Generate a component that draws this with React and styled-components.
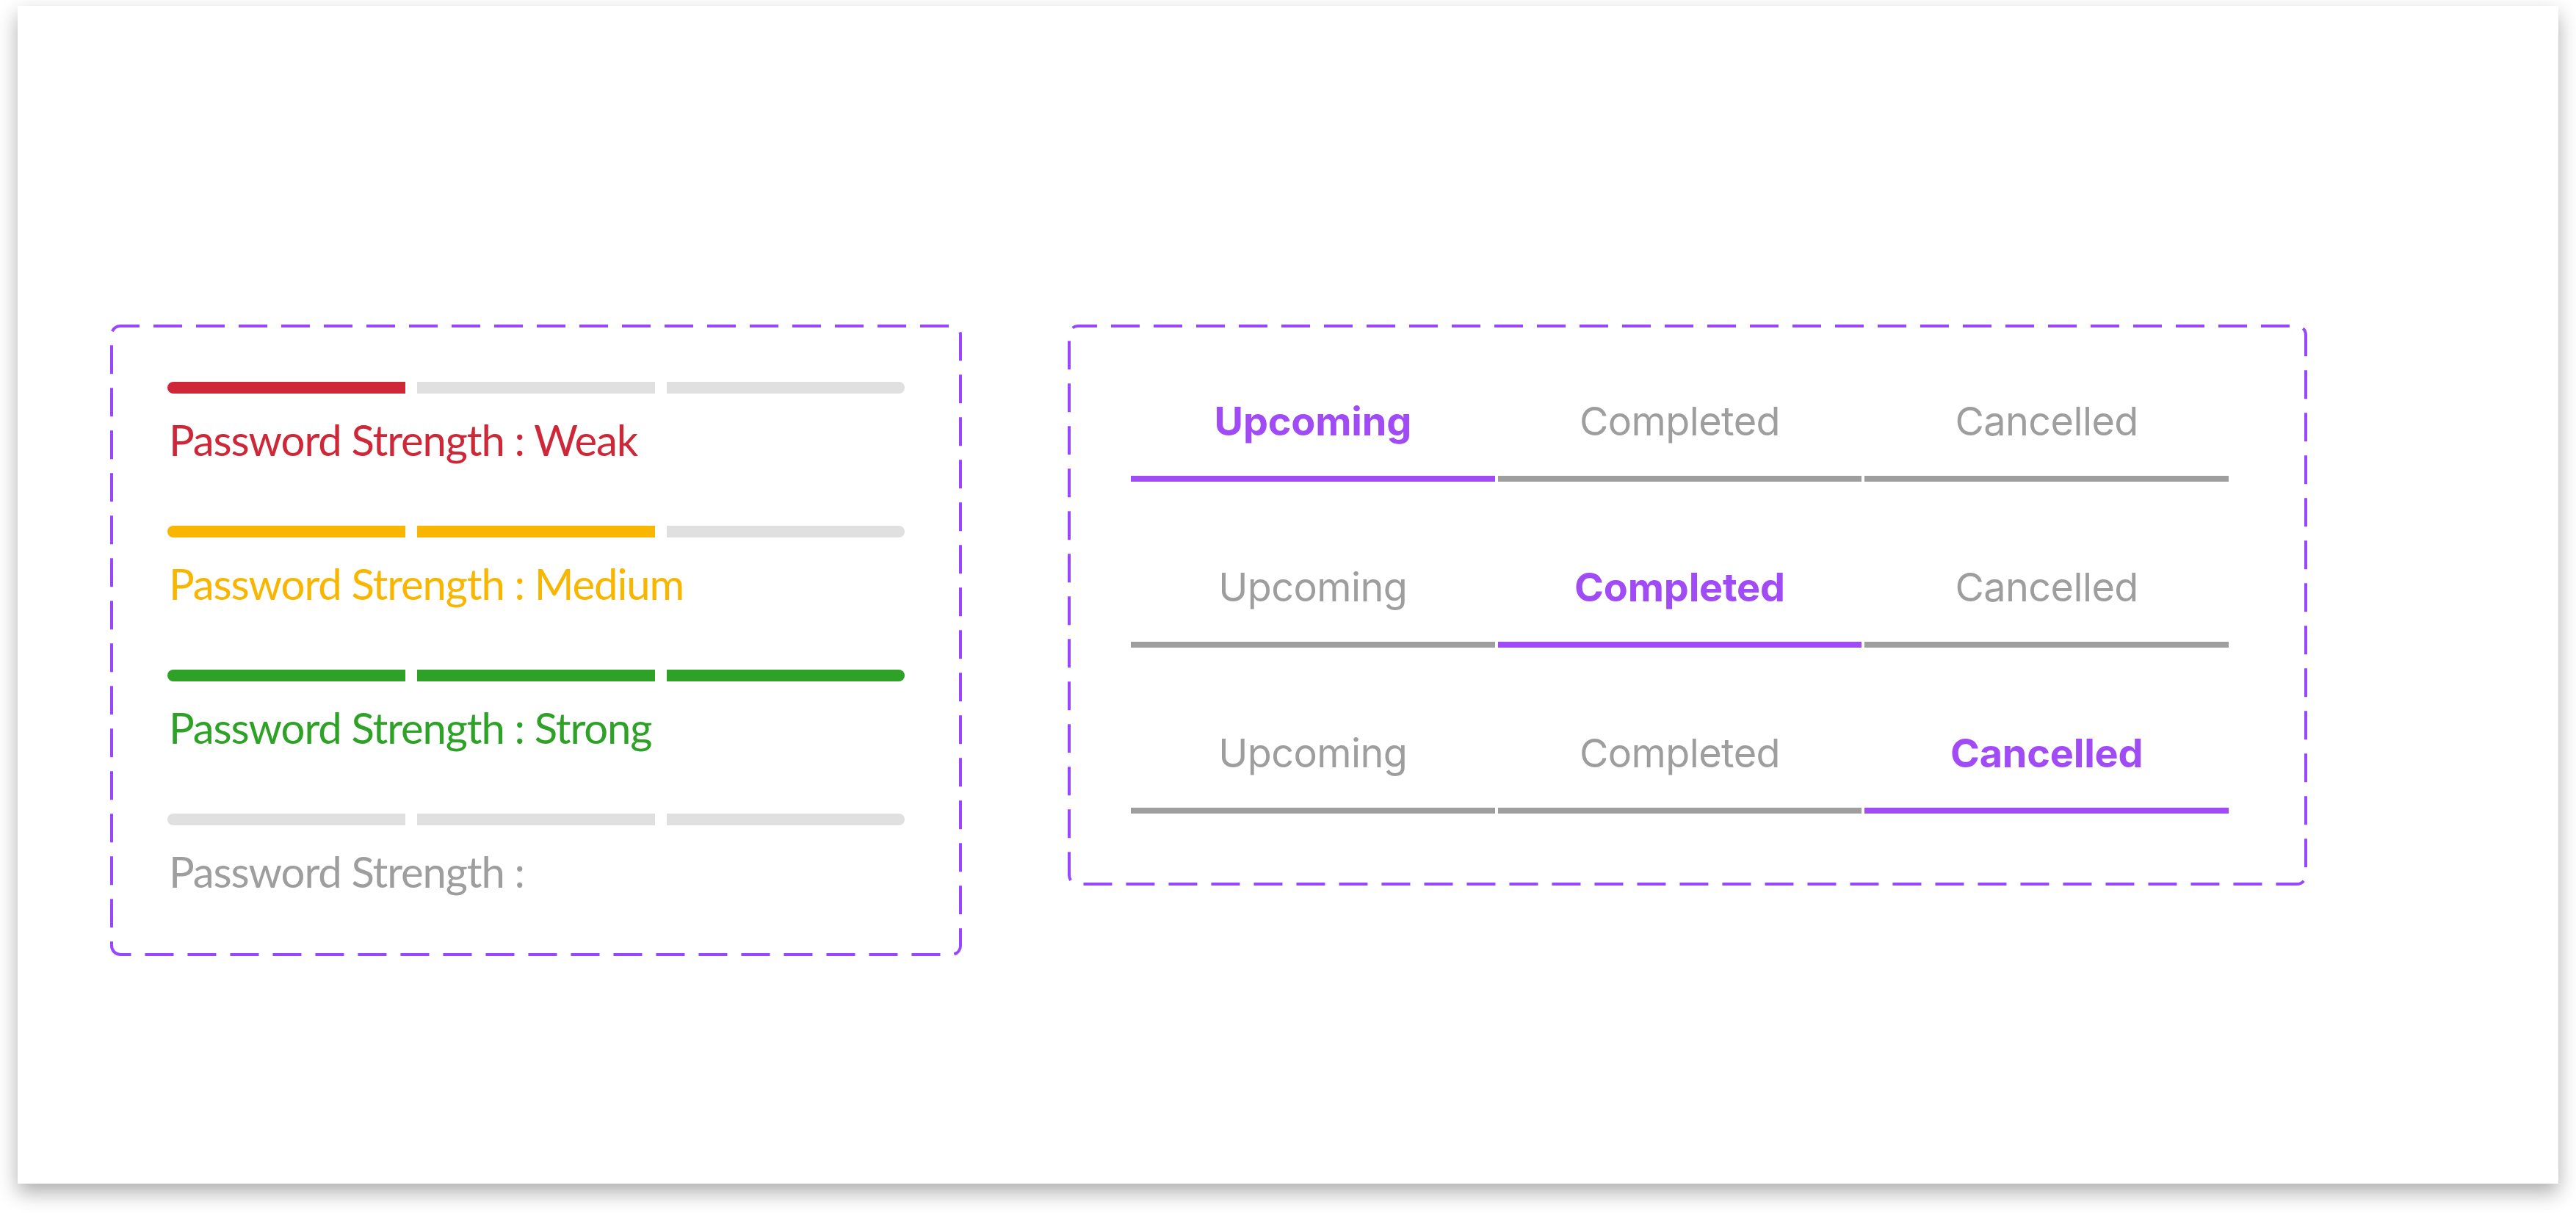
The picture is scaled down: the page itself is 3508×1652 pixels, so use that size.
import React from "react";
import styled, { createGlobalStyle } from "styled-components";

const GlobalStyle = createGlobalStyle`
  body {
    margin: 0;
    background: #ffffff;
  }
`;

const COLORS = {
  weak: "#CE2738",
  medium: "#F8B600",
  strong: "#2DA227",
  empty: "#E0E0E0",
  muted: "#9E9E9E",
  purple: "#A04BF5",
};

// Figma-style dashed outline (long dashes, rounded corners) drawn as an svg background
const dashed =
  "url(\"data:image/svg+xml,%3csvg xmlns='http://www.w3.org/2000/svg' width='100%25' height='100%25'%3e%3crect x='2' y='2' style='width:calc(100%25 - 4px);height:calc(100%25 - 4px)' fill='none' rx='12' ry='12' stroke='%239747FF' stroke-width='4' stroke-dasharray='39%2c19' stroke-dashoffset='13'/%3e%3c/svg%3e\")";

const strengths = [
  { label: "Weak", color: COLORS.weak, filled: 1 },
  { label: "Medium", color: COLORS.medium, filled: 2 },
  { label: "Strong", color: COLORS.strong, filled: 3 },
  { label: "", color: COLORS.muted, filled: 0 },
];

const tabs = ["Upcoming", "Completed", "Cancelled"];

const App = () => {
  return (
    <Page>
      <GlobalStyle />
      <Card>
        <StrengthSet>
          {strengths.map((s, i) => (
            <StrengthItem key={i}>
              <BarRow>
                {[0, 1, 2].map((n) => (
                  <BarSegment key={n} color={n < s.filled ? s.color : COLORS.empty} />
                ))}
              </BarRow>
              <StrengthText color={s.color}>
                Password Strength : {s.label}
              </StrengthText>
            </StrengthItem>
          ))}
        </StrengthSet>

        <TabSet>
          {tabs.map((active) => (
            <TabRow key={active}>
              {tabs.map((t) => (
                <Tab key={t} active={t === active}>
                  {t}
                </Tab>
              ))}
            </TabRow>
          ))}
        </TabSet>
      </Card>
    </Page>
  );
};

const Page = styled.div`
  width: 3508px;
  box-sizing: border-box;
  padding: 8px 24px 40px 24px;
`;

const Card = styled.div`
  width: 3460px;
  height: 1604px;
  box-sizing: border-box;
  background: #ffffff;
  box-shadow: 0 12px 26px rgba(0, 0, 0, 0.32);
  padding: 434px 0 0 126px;
  display: flex;
  align-items: flex-start;
  gap: 144px;
`;

const StrengthSet = styled.div`
  width: 1160px;
  height: 860px;
  box-sizing: border-box;
  padding: 78px;
  background-image: ${dashed};
  display: flex;
  flex-direction: column;
  gap: 82px;
`;

const StrengthItem = styled.div`
  display: flex;
  flex-direction: column;
  gap: 28px;
`;

const BarRow = styled.div`
  display: grid;
  grid-template-columns: repeat(3, 1fr);
  gap: 16px;
  height: 16px;
`;

const BarSegment = styled.div`
  background: ${(props) => props.color};
  &:first-child {
    border-radius: 8px 0 0 8px;
  }
  &:last-child {
    border-radius: 0 8px 8px 0;
  }
`;

const StrengthText = styled.div`
  font-family: Lato, "Noto Sans", sans-serif;
  font-size: 58px;
  line-height: 70px;
  height: 70px;
  letter-spacing: -1.1px;
  padding-left: 2px;
  color: ${(props) => props.color};
  white-space: pre;
`;

const TabSet = styled.div`
  width: 1688px;
  height: 764px;
  box-sizing: border-box;
  padding: 99px 107px 0 86px;
  background-image: ${dashed};
  display: flex;
  flex-direction: column;
  gap: 111px;
`;

const TabRow = styled.div`
  display: grid;
  grid-template-columns: repeat(3, 1fr);
  gap: 4px;
`;

const Tab = styled.div`
  font-family: Inter, "Liberation Sans", sans-serif;
  font-size: 54px;
  line-height: 66px;
  font-weight: ${(props) => (props.active ? 700 : 400)};
  letter-spacing: ${(props) => (props.active ? "-0.2px" : "-0.6px")};
  color: ${(props) => (props.active ? COLORS.purple : COLORS.muted)};
  text-align: center;
  padding-bottom: 41px;
  border-bottom: 8px solid
    ${(props) => (props.active ? COLORS.purple : COLORS.muted)};
`;

export default App;
